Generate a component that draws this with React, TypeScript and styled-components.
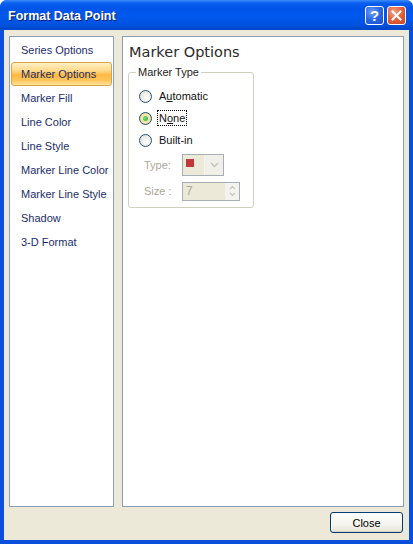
import React from "react";
import styled, { createGlobalStyle } from "styled-components";

const Global = createGlobalStyle`
  html, body { margin: 0; padding: 0; background: #fff; }
  * { box-sizing: border-box; }
`;

const Window = styled.div`
  width: 413px;
  height: 544px;
  display: flex;
  flex-direction: column;
  background: #0a4fdc;
  border-radius: 7px 7px 0 0;
  overflow: hidden;
  font-family: "Liberation Sans", Arial, sans-serif;
  font-size: 11px;
`;

const TitleBar = styled.div`
  height: 30px;
  flex: none;
  display: flex;
  align-items: center;
  padding: 1px 7px 0 8px;
  background: linear-gradient(
    180deg,
    #3c8cf8 0px,
    #0a5ff0 3px,
    #0055e8 8px,
    #0058ee 16px,
    #0052e0 24px,
    #0046c8 30px
  );
`;

const Title = styled.div`
  flex: 1;
  color: #fff;
  font-family: "Liberation Sans", Arial, sans-serif;
  font-weight: bold;
  font-size: 12.5px;
  text-shadow: 1px 1px 0 #0a1e6a;
`;

const CaptionButton = styled.div<{ $variant: "help" | "close" }>`
  width: 19px;
  height: 19px;
  margin-left: 3px;
  border: 1px solid #fff;
  border-radius: 3px;
  display: flex;
  align-items: center;
  justify-content: center;
  background: ${(p) =>
    p.$variant === "close"
      ? "radial-gradient(circle at 35% 30%, #f3a58a 0%, #e4633f 45%, #c9431c 100%)"
      : "radial-gradient(circle at 35% 30%, #6f9ff5 0%, #2a66e6 50%, #1b4fd0 100%)"};
  color: #fff;
  font-family: "Liberation Sans", Arial, sans-serif;
  font-weight: bold;
  font-size: 15px;
`;

const Frame = styled.div`
  flex: 1;
  display: flex;
  flex-direction: column;
  margin: 0 4px 4px 4px;
  background: #ece9d8;
`;

const Panels = styled.div`
  display: flex;
  gap: 8px;
  padding: 6px 5px 0 5px;
  height: 477px;
`;

const NavPanel = styled.div`
  width: 105px;
  background: #fff;
  border: 1px solid #8a9eb4;
  padding: 1px 1px;
  display: flex;
  flex-direction: column;
`;

const NavItem = styled.div<{ $active?: boolean }>`
  height: 24px;
  display: flex;
  align-items: center;
  padding-left: 9px;
  color: #1b2d6b;
  border-radius: 3px;
  border: 1px solid ${(p) => (p.$active ? "#d8a448" : "transparent")};
  background: ${(p) =>
    p.$active
      ? "linear-gradient(180deg, #fff0c4 0%, #ffd98a 35%, #ffb93e 55%, #ffc75e 80%, #ffe3a0 100%)"
      : "transparent"};
  white-space: nowrap;
`;

const ContentPanel = styled.div`
  flex: 1;
  background: #fff;
  border: 1px solid #8a9eb4;
  padding: 5px 5px;
  display: flex;
  flex-direction: column;
  align-items: flex-start;
`;

const Heading = styled.div`
  font-family: "DejaVu Sans", "Liberation Sans", sans-serif;
  font-size: 14.5px;
  color: #2b2b2b;
  line-height: 20px;
  margin-bottom: 4px;
  padding-left: 1px;
`;

const Group = styled.fieldset`
  margin: 0;
  width: 126px;
  height: 142px;
  border: 1px solid #d0d0bf;
  border-radius: 3px;
  padding: 7px 0 0 7px;
  display: flex;
  flex-direction: column;
`;

const Legend = styled.legend`
  padding: 0 2px;
  margin-left: 0;
  color: #1e1e1e;
  font-size: 11px;
`;

const RadioRow = styled.div`
  display: flex;
  align-items: center;
  height: 22px;
  padding-left: 3px;
  color: #111;
`;

const RadioCircle = styled.span<{ $checked?: boolean }>`
  width: 13px;
  height: 13px;
  border-radius: 50%;
  border: 1px solid #1c5180;
  background: radial-gradient(circle at 60% 60%, #ffffff 0%, #e6e6dc 70%, #d0d0c4 100%);
  display: flex;
  align-items: center;
  justify-content: center;
  margin-right: 5px;
  ${(p) =>
    p.$checked
      ? "background: radial-gradient(circle at 50% 50%, #fff 0%, #f3e3a8 55%, #e3b94a 100%);"
      : ""}
`;

const Dot = styled.span`
  width: 5px;
  height: 5px;
  border-radius: 50%;
  background: radial-gradient(circle at 40% 40%, #7ee37a 0%, #21a121 100%);
`;

const Label = styled.span<{ $focus?: boolean }>`
  padding: 1px 1px;
  border: 1px dotted ${(p) => (p.$focus ? "#000" : "transparent")};
`;

const FieldRow = styled.div`
  display: flex;
  align-items: center;
  margin-top: 2px;
  height: 24px;
  padding-left: 8px;
  color: #aca899;
`;

const FieldLabel = styled.span`
  width: 38px;
`;

const DropBox = styled.div`
  width: 42px;
  height: 22px;
  border: 1px solid #a7aeb8;
  background: #ece9d8;
  display: flex;
`;

const Swatch = styled.div`
  flex: 1;
  display: flex;
  align-items: center;
  padding-left: 3px;
  padding-bottom: 4px;
`;

const RedSquare = styled.span`
  width: 8px;
  height: 8px;
  background: #c0393a;
`;

const DropArrow = styled.div`
  width: 19px;
  border-left: 1px solid #f4f3ee;
  display: flex;
  align-items: center;
  justify-content: center;
  background: #f0efe8;
`;

const SpinBox = styled.div`
  width: 58px;
  height: 19px;
  border: 1px solid #a7aeb8;
  background: #ece9d8;
  display: flex;
  align-items: stretch;
`;

const SpinValue = styled.div`
  flex: 1;
  padding-left: 3px;
  display: flex;
  align-items: center;
  font-size: 12px;
  color: #aca899;
`;

const SpinArrows = styled.div`
  width: 14px;
  display: flex;
  align-items: center;
  justify-content: center;
  background: #f4f3ee;
`;

const Footer = styled.div`
  flex: 1;
  display: flex;
  justify-content: flex-end;
  align-items: flex-start;
  padding: 5px 6px 0 0;
`;

const Button = styled.button`
  width: 73px;
  height: 21px;
  border: 1px solid #003c74;
  border-radius: 3px;
  background: linear-gradient(180deg, #ffffff 0%, #f5f4ee 60%, #e6e3d6 100%);
  box-shadow: inset 0 -1px 0 #d6d0c5, inset 1px 0 0 #fff;
  font-family: "Liberation Sans", Arial, sans-serif;
  font-size: 11px;
  color: #000;
  padding: 0;
`;

const navItems = [
  "Series Options",
  "Marker Options",
  "Marker Fill",
  "Line Color",
  "Line Style",
  "Marker Line Color",
  "Marker Line Style",
  "Shadow",
  "3-D Format",
];

export default function App() {
  return (
    <>
      <Global />
      <Window>
        <TitleBar>
          <Title>Format Data Point</Title>
          <CaptionButton $variant="help">?</CaptionButton>
          <CaptionButton $variant="close">
            <svg width="11" height="11" viewBox="0 0 11 11">
              <path d="M1.5 1.5 L9.5 9.5 M9.5 1.5 L1.5 9.5" stroke="#fff" strokeWidth="2" strokeLinecap="square" />
            </svg>
          </CaptionButton>
        </TitleBar>
        <Frame>
          <Panels>
            <NavPanel>
              {navItems.map((n) => (
                <NavItem key={n} $active={n === "Marker Options"}>
                  {n}
                </NavItem>
              ))}
            </NavPanel>
            <ContentPanel>
              <Heading>Marker Options</Heading>
              <Group>
                <Legend>Marker Type</Legend>
                <RadioRow>
                  <RadioCircle />
                  <Label>
                    A<u>u</u>tomatic
                  </Label>
                </RadioRow>
                <RadioRow>
                  <RadioCircle $checked>
                    <Dot />
                  </RadioCircle>
                  <Label $focus>
                    N<u>o</u>ne
                  </Label>
                </RadioRow>
                <RadioRow>
                  <RadioCircle />
                  <Label>Built-in</Label>
                </RadioRow>
                <FieldRow>
                  <FieldLabel>Type:</FieldLabel>
                  <DropBox>
                    <Swatch>
                      <RedSquare />
                    </Swatch>
                    <DropArrow>
                      <svg width="9" height="6" viewBox="0 0 9 6">
                        <path d="M1 1 L4.5 4.5 L8 1" stroke="#c3c3bd" strokeWidth="1.5" fill="none" />
                      </svg>
                    </DropArrow>
                  </DropBox>
                </FieldRow>
                <FieldRow>
                  <FieldLabel>Size :</FieldLabel>
                  <SpinBox>
                    <SpinValue>7</SpinValue>
                    <SpinArrows>
                      <svg width="7" height="12" viewBox="0 0 7 12">
                        <path d="M1 4 L3.5 1.5 L6 4 M1 8 L3.5 10.5 L6 8" stroke="#c3c3bd" strokeWidth="1.2" fill="none" />
                      </svg>
                    </SpinArrows>
                  </SpinBox>
                </FieldRow>
              </Group>
            </ContentPanel>
          </Panels>
          <Footer>
            <Button>Close</Button>
          </Footer>
        </Frame>
      </Window>
    </>
  );
}
